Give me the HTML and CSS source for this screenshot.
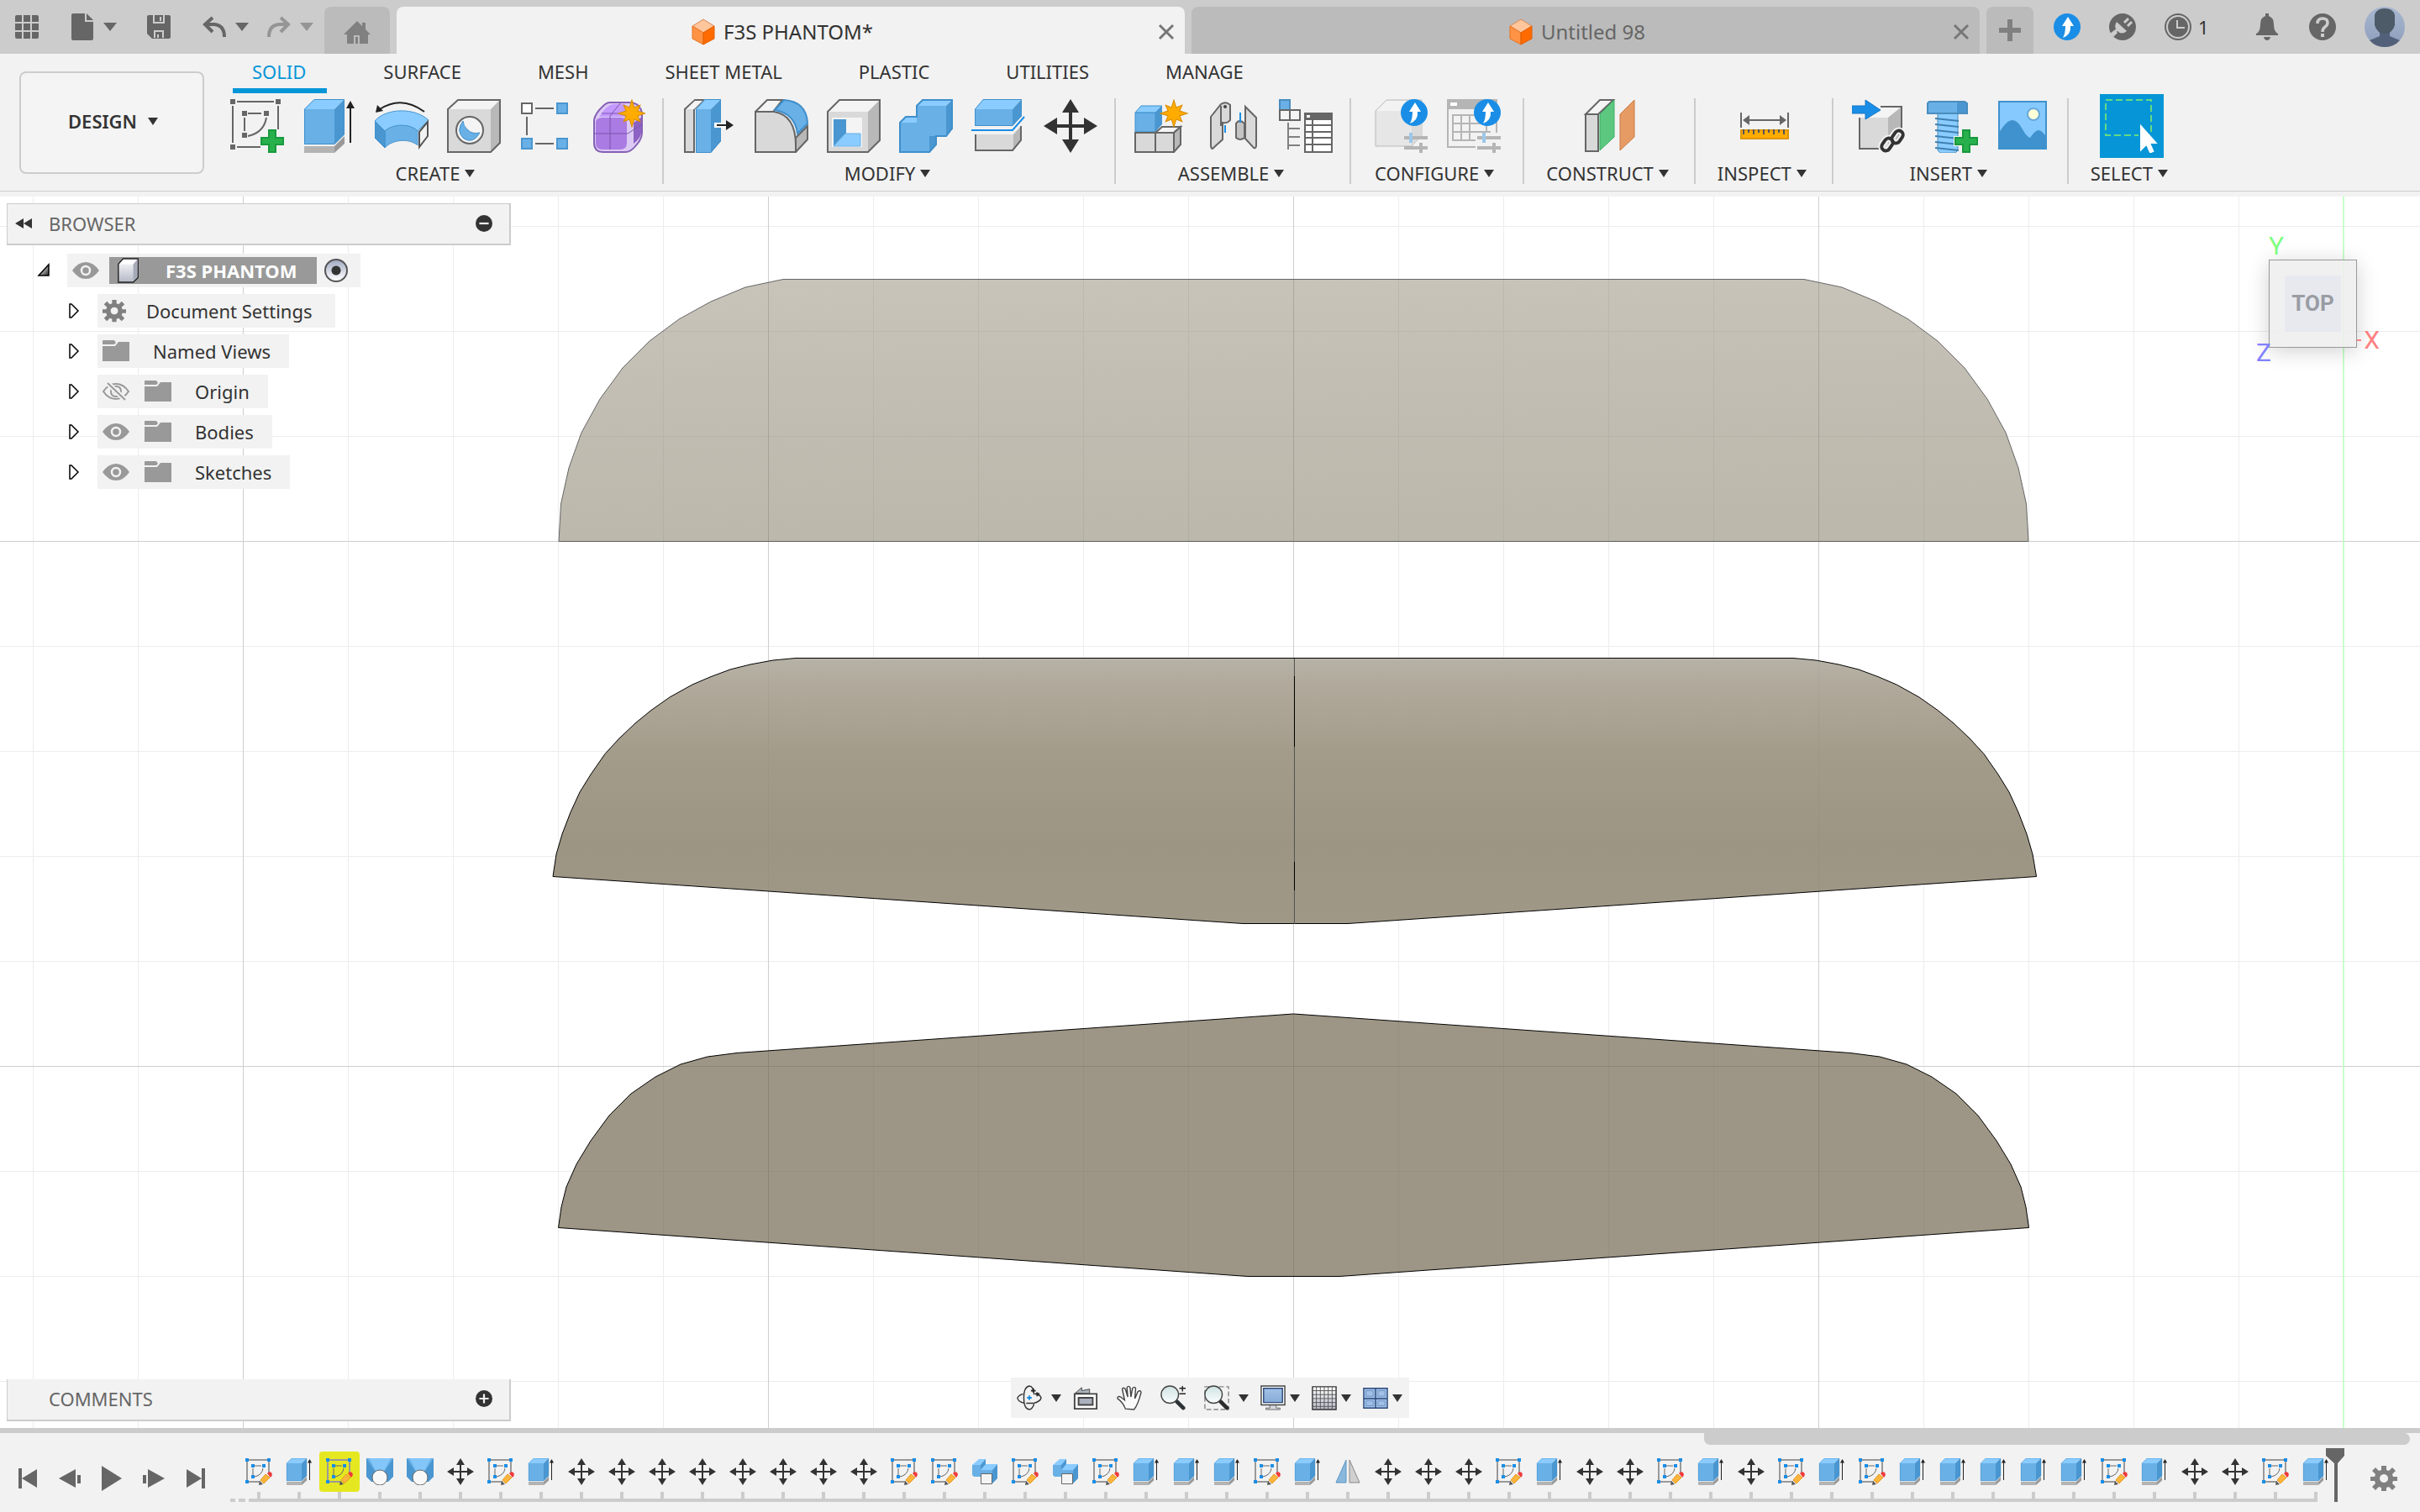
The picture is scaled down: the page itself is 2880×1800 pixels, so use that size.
FILE: index.html
```html
<!DOCTYPE html>
<html lang="en">
<head>
<meta charset="UTF-8">
<meta name="viewport" content="width=device-width,initial-scale=1">
<title>F3S PHANTOM*</title>
<link rel="stylesheet" href="styles.css">
</head>
<body>

<!-- ===== icon sprite ===== -->
<svg class="sprite" aria-hidden="true">
  <defs>
    <linearGradient id="metal" x1="0" y1="0" x2="0" y2="1"><stop offset="0" stop-color="#fff"/><stop offset="1" stop-color="#b4b9c6"/></linearGradient>
    <linearGradient id="dark" x1="0" y1="0" x2="1" y2="1"><stop offset=".3" stop-color="#ddd"/><stop offset="1" stop-color="#222"/></linearGradient>
    <linearGradient id="sky" x1="0" y1="0" x2="0" y2="1"><stop offset="0" stop-color="#a9b8d0"/><stop offset="1" stop-color="#8d9dba"/></linearGradient>
    <linearGradient id="glass" x1="0" y1="0" x2="0" y2="1"><stop offset="0" stop-color="#cfe3e3"/><stop offset="1" stop-color="#fbfdfd"/></linearGradient>
    <linearGradient id="screen" x1="0" y1="0" x2="0" y2="1"><stop offset="0" stop-color="#a3c1e6"/><stop offset="1" stop-color="#86abd8"/></linearGradient>
  </defs>

  <!-- title bar -->
  <symbol id="i-apps" viewBox="0 0 32 32"><path fill="#666" d="M4 2h6v8H2V4q0-2 2-2zM12 2h8v8h-8zM22 2h6q2 0 2 2v6h-8zM2 12h8v8H2zM12 12h8v8h-8zM22 12h8v8h-8zM2 22h8v8H4q-2 0-2-2zM12 22h8v8h-8zM22 22h8v6q0 2-2 2h-6z"/></symbol>
  <symbol id="i-file" viewBox="0 0 32 32"><path fill="#666" d="M5 0h14v10h10v20q0 2-2 2H5q-2 0-2-2V2q0-2 2-2zM21 0l8 8h-8z"/></symbol>
  <symbol id="i-save" viewBox="0 0 32 32"><path fill="#666" fill-rule="evenodd" d="M4 2h24q2 0 2 2v24q0 2-2 2H8l-6-6V4q0-2 2-2zM9 2v10h14V2h-2v8H11V2zM10 20v9h2v-7h8v7h2v-9zM17 4h2v5h-2zM14 25h2v4h-2z"/></symbol>
  <symbol id="i-undo" viewBox="0 0 32 32"><path fill="none" stroke="#666" stroke-width="4" d="M14 5L5 13l9 9M6 13h10q12 1 12 15"/></symbol>
  <symbol id="i-redo" viewBox="0 0 32 32"><path fill="none" stroke="#959595" stroke-width="4" d="M18 5l9 8-9 9M26 13H16Q4 14 4 28"/></symbol>
  <symbol id="i-home" viewBox="0 0 32 32"><path fill="#808080" fill-rule="evenodd" d="M16 3l6 6V5h4v8l6 6h-3v11H19V20h-7v10H4V19H0zM14 22h3v8h-3z"/></symbol>
  <symbol id="i-cube" viewBox="0 0 28 32"><path fill="#ffc59b" stroke="#d98a55" d="M14 1l13 8-13 8L1 9z"/><path fill="#ff9345" stroke="#e67322" d="M1 9l13 8v14L1 24z"/><path fill="#ff6b00" stroke="#e05e00" d="M27 9l-13 8v14l13-7z"/></symbol>
  <symbol id="i-close" viewBox="0 0 20 20"><path stroke="#777" stroke-width="3" d="M2 2l16 16M18 2L2 18"/></symbol>
  <symbol id="i-plus" viewBox="0 0 26 26"><path stroke="#808080" stroke-width="6" d="M13 0v26M0 13h26"/></symbol>
  <symbol id="i-up" viewBox="0 0 32 32"><circle cx="16" cy="16" r="16" fill="#1a8ee6"/><path fill="#fff" d="M17 4l7 11h-4q1 10-9 14 3-5 3-14h-4z"/></symbol>
  <symbol id="i-ext" viewBox="0 0 32 32"><circle cx="16" cy="16" r="16" fill="#666"/><path fill="none" stroke="#ccc" stroke-width="3" d="M1 26l9-7M18 11l5-5M22 15l5-5"/><path fill="#ccc" d="M9 10l12 11q-6 5-11 0-5-5-1-11z"/><path stroke="#ccc" stroke-width="3" d="M9 22l-5 5"/></symbol>
  <symbol id="i-clock" viewBox="0 0 32 32"><circle cx="16" cy="16" r="15" fill="none" stroke="#666" stroke-width="2"/><circle cx="16" cy="16" r="12" fill="#666"/><path fill="none" stroke="#ccc" stroke-width="2" d="M15 8v9h9"/></symbol>
  <symbol id="i-bell" viewBox="0 0 32 32"><path fill="#666" d="M14 0h4v3q6 2 6 10 0 9 5 11v2H3v-2q5-2 5-11 0-8 6-10zM12 28h8q-1 4-4 4t-4-4z"/></symbol>
  <symbol id="i-help" viewBox="0 0 32 32"><circle cx="16" cy="16" r="16" fill="#666"/><path fill="none" stroke="#ccc" stroke-width="3.5" d="M10 12q0-6 6-6t6 5q0 3-3 5t-3 6"/><path fill="#ccc" d="M14 24h4v4h-4z"/></symbol>
  <symbol id="i-user" viewBox="0 0 48 48"><circle cx="24" cy="24" r="24" fill="url(#sky)"/><path fill="#53607a" d="M6 40l12-5v-5h12v5l12 5q-7 8-18 8T6 40z"/><path fill="#4d5b68" d="M12 10q2-8 12-8t12 8v12q-3 10-12 10T12 22z"/></symbol>

  <!-- create -->
  <symbol id="i-sketch" viewBox="0 0 64 64"><path fill="none" stroke="#666" stroke-width="2" d="M8 3h44M3 8v44M57 8v28M8 57h28M21 17h16M17 22v16M43 22q-3 18-22 22"/><path fill="#666" d="M0 0h6v6H0zM54 0h6v6h-6zM0 54h6v6H0zM14 14h6v6h-6zM40 14h6v6h-6zM14 40h6v6h-6z"/><path fill="#28b04c" stroke="#189a3c" stroke-width="2" d="M46 37h8v9h9v8h-9v9h-8v-9h-9v-8h9z"/></symbol>
  <symbol id="i-extrude" viewBox="0 0 64 64"><path fill="#b3b3b3" d="M2 56h36v8H2z"/><path fill="#999" d="M38 56l12-12v9L38 64z"/><path fill="#8accff" d="M2 12L14 0h36L38 12z"/><path fill="#69b0e6" d="M2 12h36v42H2z"/><path fill="#4a96d0" d="M38 12L50 0v42L38 54z"/><path fill="none" stroke="#3f8fcb" d="M2.500 12L14 .5h35.500V42L38 53.500H2.500z"/><path stroke="#222" stroke-width="2" d="M57 52V8"/><path fill="#222" d="M57 2l5 9H52z"/></symbol>
  <symbol id="i-revolve" viewBox="0 0 64 64"><path fill="#8accff" stroke="#4a96d0" d="M0 26C14 10 48 10 64 25L51 38C42 29 22 29 12 38z"/><path fill="#69b0e6" stroke="#4a96d0" d="M12 38C22 29 42 29 51 38v17c-9-8-29-8-39 3z"/><path fill="#4a96d0" stroke="#3f8fcb" d="M0 26l12 12v20L0 46z"/><path fill="#f2f2f2" stroke="#555" stroke-width="2" d="M53 39l10-12v17L53 57z"/><path fill="none" stroke="#222" stroke-width="2" d="M6 12Q32-5 59 15"/><path fill="#222" d="M1 16L3 7l7 7z"/></symbol>
  <symbol id="i-box" viewBox="0 0 64 64"><path fill="#f4f4f4" d="M1 12L13 1h50L52 12z"/><path fill="#d9d9d9" d="M1 12h51v51H1z"/><path fill="#b8b8b8" d="M52 12L63 1v51L52 63z"/><path fill="none" stroke="#666" stroke-width="2" d="M1 12L13 1h50v51L52 63H1z"/></symbol>
  <symbol id="i-hole" viewBox="0 0 64 64"><use href="#i-box"/><circle cx="27" cy="37" r="16" fill="#f4f4f4" stroke="#666" stroke-width="2"/><path fill="#69b0e6" stroke="#3f8fcb" d="M19 26q-9 12 1 21 11 7 19-7-9 2-14-3-6-5-6-11z"/></symbol>
  <symbol id="i-pattern" viewBox="0 0 64 64"><path fill="#fff" stroke="#666" stroke-width="2" d="M3 5h12v12H3z"/><path fill="#69b0e6" stroke="#4a96d0" stroke-width="2" d="M45 5h12v12H45zM3 47h12v12H3zM45 47h12v12H45z"/><path stroke="#666" stroke-width="2" d="M19 11h22M9 21v22M19 53h22"/></symbol>
  <symbol id="i-star" viewBox="0 0 32 32"><path fill="#ffab00" stroke="#d98e00" d="M16 1l2.700 8.500 6.500-2.700-2.700 6.500L31 16l-8.500 2.700 2.700 6.500-6.500-2.700L16 31l-2.700-8.500-6.500 2.700 2.700-6.500L1 16l8.500-2.700-2.700-6.500 6.500 2.700z"/></symbol>
  <symbol id="i-form" viewBox="0 0 64 64"><path fill="#dccaf5" stroke="#8560b5" stroke-width="2" d="M3 25Q4 17 14 8q4-4 8-4h22q16 0 16 16v20q0 8-7 15-6 8-13 8H14Q3 63 3 52z"/><path fill="#c49aff" d="M14 14q7-8 12-8h14v15H9z"/><path fill="#a97be3" d="M5 28q0-6 8-6h22q7 0 7 8v22q0 8-8 8H13q-8 0-8-8z"/><path fill="#8d62c4" d="M50 28l9-6v18q0 6-9 13z"/><path fill="none" stroke="#7d55ad" d="M22 60V20L34 5M3 41h40l17-11M12 17h36"/><use href="#i-star" x="31" y="0" width="34" height="34"/></symbol>

  <!-- modify -->
  <symbol id="i-presspull" viewBox="0 0 64 64"><path fill="#d9d9d9" stroke="#666" stroke-width="2" d="M3 12L15 1h10L14 12v51H3z"/><path fill="#f4f4f4" d="M5 12L15 2h9L14 12z"/><path fill="#8accff" d="M16 12L27 0h19L34 12z"/><path fill="#69b0e6" d="M16 12h18v52H16z"/><path fill="#4a96d0" d="M34 12L46 0v50L34 64z"/><path fill="none" stroke="#3f8fcb" d="M16.500 12L27 .5h18.500V50L34 63.500H16.500z"/><path stroke="#fff" stroke-width="6" d="M38 31h18"/><path stroke="#222" stroke-width="2" d="M41 31h14"/><path fill="#222" d="M52 25l9 6-9 6z"/></symbol>
  <symbol id="i-fillet" viewBox="0 0 64 64"><path fill="#d9d9d9" stroke="#666" stroke-width="2" d="M1 15h22q26 4 26 40v8H1z"/><path fill="#b8b8b8" stroke="#666" stroke-width="2" d="M49 46l14-14v16L49 63z"/><path fill="#f4f4f4" stroke="#666" stroke-width="2" d="M1 15L15 1h18L22 15z"/><path fill="#69b0e6" stroke="#3f8fcb" stroke-width="2" d="M35 1q27 2 28 28L51 41Q48 17 24 13z"/></symbol>
  <symbol id="i-shell" viewBox="0 0 64 64"><path fill="#f4f4f4" d="M1 15L15 1h48L49 15z"/><path fill="#d9d9d9" d="M1 15h48v48H1z"/><path fill="#b8b8b8" d="M49 15L63 1v48L49 63z"/><path fill="none" stroke="#666" stroke-width="2" d="M1 15L15 1h48v48L49 63H1z"/><path fill="#f4f4f4" d="M6 22h36v35H6z"/><path fill="#4a96d0" d="M8 24h15v17L8 56z"/><path fill="#8accff" stroke="#69b0e6" d="M8 56l14-15h18v15z"/></symbol>
  <symbol id="i-combine" viewBox="0 0 64 64"><path fill="#8accff" d="M0 28l7-7h15v7zM21 8l7-8h36l-8 8z"/><path fill="#69b0e6" d="M0 28h21V8h35v36H36v20H0z"/><path fill="#4a96d0" d="M56 8l8-8v35l-8 9H44v10l-8 10V44h20z"/><path fill="none" stroke="#3f8fcb" stroke-width="2" d="M1 28l7-7h13V8l7-7h35v34l-7 9H44v10l-8 9H1z"/></symbol>
  <symbol id="i-split" viewBox="0 0 64 64"><path fill="#8accff" d="M4 12L14 0h46L49 12z"/><path fill="#69b0e6" d="M4 12h45v20H4z"/><path fill="#4a96d0" d="M49 12L60 0v20L49 32z"/><path fill="none" stroke="#3f8fcb" d="M4.500 12L14 .5h45.500V20L49 31.500H4.500z"/><path fill="none" stroke="#1a8ee6" stroke-width="2" d="M0 37h49l14-16"/><path fill="#d9d9d9" d="M5 42h45v19H5z"/><path fill="#b8b8b8" d="M50 42l9-10v18l-9 11z"/><path fill="none" stroke="#666" stroke-width="2" d="M5 42v19h44l10-12V32"/></symbol>
  <symbol id="i-move" viewBox="0 0 64 64"><path stroke="#333" stroke-width="4" d="M32 8v48M8 32h48"/><path fill="#333" d="M32 0l10 16H22zM32 64l10-16H22zM0 32l16-10v20zM64 32L48 22v20z"/></symbol>

  <!-- assemble -->
  <symbol id="i-component" viewBox="0 0 64 64"><path fill="#69b0e6" stroke="#3f8fcb" d="M1 16h24v23H1z"/><path fill="#8accff" stroke="#3f8fcb" d="M1 16l7-8h25l-8 8z"/><path fill="#4a96d0" d="M25 16l8-8v22l-8 9z"/><path fill="#d9d9d9" stroke="#666" stroke-width="2" d="M1 40h24v23H1zM25 40h22v23H25z"/><path fill="#f4f4f4" stroke="#666" stroke-width="2" d="M25 40l8-7h22l-8 7z"/><path fill="#b8b8b8" stroke="#666" stroke-width="2" d="M47 40l8-7v21l-8 9z"/><use href="#i-star" x="30" y="0" width="34" height="34"/></symbol>
  <symbol id="i-joint" viewBox="0 0 64 64"><path fill="#d9d9d9" stroke="#666" stroke-width="2" d="M5 21L17 6q6-4 11 1v18q-3 4-9 3v20L7 59q-2 0-2-4z"/><path fill="none" stroke="#666" stroke-width="2" d="M17 8v24"/><circle cx="22" cy="9" r="2" fill="#444"/><path fill="#d9d9d9" stroke="#666" stroke-width="2" d="M46 9l13 13v33q0 4-3 3L46 47z"/><path fill="#c4c4c4" stroke="#666" stroke-width="2" d="M35 29q4-6 10 0v17q-5 4-10 0z"/><path stroke="#1a8ee6" stroke-width="2" d="M22 31v9M40 16v12"/></symbol>
  <symbol id="i-bom" viewBox="0 0 64 64"><path fill="#69b0e6" stroke="#4a8dbe" stroke-width="2" d="M1 1h12v12H1z"/><path fill="#f4f4f4" stroke="#666" stroke-width="2" d="M1 13h12v12H1zM13 13h12v12H13z"/><path fill="none" stroke="#808080" stroke-width="2" d="M11 28v32M11 35h14M11 45h14M11 55h14"/><path fill="#fff" stroke="#666" stroke-width="2" d="M31 17h32v46H31z"/><path fill="#666" d="M31 16h33v9H31z"/><path fill="#fff" d="M33 19h4v3h-4z"/><path fill="none" stroke="#666" stroke-width="2" d="M31 31h32M31 39h32M31 46h32M31 54h32M40 24v39"/></symbol>

  <!-- configure -->
  <symbol id="i-tune" viewBox="0 0 28 24"><path fill="none" stroke="#b5b5b5" stroke-width="4" d="M0 6h28M0 18h28"/><path stroke="#9cc8ea" stroke-width="4" d="M8 0v12"/><path stroke="#b5b5b5" stroke-width="4" d="M20 12v12"/></symbol>
  <symbol id="i-config" viewBox="0 0 64 64"><path fill="#e6e6e6" stroke="#bbb" d="M1 14L14 1h42v42L44 56H1z"/><path fill="#f2f2f2" d="M2 14L14 2h41L44 14z"/><path fill="#dadada" d="M44 14L56 2v40L44 54z"/><use href="#i-up" x="31" y="0" width="32" height="32"/><use href="#i-tune" x="35" y="40" width="28" height="24"/></symbol>
  <symbol id="i-configtable" viewBox="0 0 64 64"><path fill="#f2f2f2" stroke="#b5b5b5" stroke-width="2" d="M1 1h58v56H1z"/><path fill="#b5b5b5" d="M0 0h60v12H0z"/><path fill="#fff" d="M4 4h8v4H4z"/><path fill="none" stroke="#b5b5b5" stroke-width="2" d="M7 19h40v30H7zM7 29h45M7 39h45M17 19v30M27 19v30"/><use href="#i-up" x="32" y="0" width="32" height="32"/><path fill="#f2f2f2" d="M34 40h30v24H34z"/><use href="#i-tune" x="36" y="40" width="28" height="24"/></symbol>

  <!-- construct, inspect, insert, select -->
  <symbol id="i-plane" viewBox="0 0 64 64"><path fill="#d9d9d9" stroke="#666" stroke-width="2" d="M18 62H3V18h15z"/><path fill="#f4f4f4" stroke="#666" stroke-width="2" d="M3 18L20 1h16L18 18z"/><path fill="#5bc77f" stroke="#3cae62" d="M20 18L37 1v44L20 61z"/><path fill="#e69b65" stroke="#c97b40" d="M44 18L61 1v44L44 61z"/></symbol>
  <symbol id="i-measure" viewBox="0 0 64 64"><path stroke="#666" stroke-width="2" d="M4 16v18M60 16v18M8 25h48"/><path fill="#666" d="M6 25l8-6v12zM58 25l-8-6v12z"/><path fill="#ffab00" stroke="#e09600" stroke-width="2" d="M4 37h56v10H4z"/><path stroke="#555" stroke-width="2" d="M7 36v6M13 36v4M19 36v6M25 36v4M31 36v6M37 36v4M43 36v6M49 36v4M55 36v6"/></symbol>
  <symbol id="i-derive" viewBox="0 0 64 64"><path fill="#d9d9d9" d="M9 22h34v37H9z"/><path fill="#f4f4f4" d="M9 22L24 9h35L43 22z"/><path fill="#b8b8b8" d="M43 22L59 9v36L43 59z"/><path fill="none" stroke="#666" stroke-width="2" d="M9 22v37h25M34 9h25v30"/><path fill="#1a8ee6" stroke="#1476c4" d="M0 8h16V1l18 12-18 11v-7H0z"/><g fill="none" stroke="#f2f2f2" stroke-width="8"><rect x="49" y="37" width="10" height="16" rx="5" transform="rotate(35 54 45)"/><rect x="37" y="46" width="10" height="16" rx="5" transform="rotate(35 42 54)"/></g><g fill="none" stroke="#333" stroke-width="4"><rect x="49" y="37" width="10" height="16" rx="5" transform="rotate(35 54 45)"/><rect x="37" y="46" width="10" height="16" rx="5" transform="rotate(35 42 54)"/></g></symbol>
  <symbol id="i-bolt" viewBox="0 0 64 64"><path fill="#8accff" stroke="#4a8dbe" d="M16 17h24v44l-3 3H19l-3-3z"/><path fill="#69b0e6" stroke="#4a8dbe" stroke-width="2" d="M6 3h42l3 2v12H4V5z"/><path fill="#4a96d0" d="M39 4h11v12H39z"/><path stroke="#3f80b0" stroke-width="2" d="M13 23l28 3M13 30l28 3M13 37l28 3M13 44l28 3M13 51l28 3M13 58l28 3"/><path fill="#28b04c" stroke="#f2f2f2" stroke-width="4" d="M46 37h8v9h9v8h-9v9h-8v-9h-9v-8h9z"/><path fill="#28b04c" stroke="#189a3c" stroke-width="2" d="M46 37h8v9h9v8h-9v9h-8v-9h-9v-8h9z"/></symbol>
  <symbol id="i-image" viewBox="0 0 64 64"><path fill="#85c9ff" stroke="#3f92cd" stroke-width="2" d="M3 3h56v56H3z"/><circle cx="44" cy="18" r="7" fill="#ffffd9" stroke="#69a9d9" stroke-width="2"/><path fill="#3f92cd" d="M3 40q9-15 16-15 6 0 12 11 5 9 9 10 6-9 10-9 4 0 9 8v14H3z"/></symbol>
  <symbol id="i-select" viewBox="0 0 64 64"><path fill="none" stroke="#64da82" stroke-width="2" stroke-dasharray="8 4" d="M1 1h54v42H1z"/><path fill="#fff" stroke="#0696d7" stroke-width="2" d="M41 27v38l8-8 4 9 7-3-4-9h9z"/></symbol>

  <!-- browser -->
  <symbol id="i-rewind" viewBox="0 0 20 12"><path fill="#333" d="M10 0v12L0 6zM20 0v12L10 6z"/></symbol>
  <symbol id="i-minus" viewBox="0 0 18 18"><circle cx="9" cy="9" r="9" fill="#333"/><path stroke="#f2f2f2" stroke-width="2" d="M4 9h10"/></symbol>
  <symbol id="i-add" viewBox="0 0 18 18"><circle cx="9" cy="9" r="9" fill="#333"/><path stroke="#f2f2f2" stroke-width="2" d="M4 9h10M9 4v10"/></symbol>
  <symbol id="i-open" viewBox="0 0 16 20"><path fill="url(#dark)" stroke="#000" stroke-width="1.500" d="M14 3v13H2z"/></symbol>
  <symbol id="i-closed" viewBox="0 0 16 20"><path fill="#fff" stroke="#000" stroke-width="1.500" d="M3 2l2 0 8 8-8 8H3z"/></symbol>
  <symbol id="i-eye" viewBox="0 0 32 32"><path fill="#999" d="M0 16Q7 6 16 6t16 10q-7 10-16 10T0 16z"/><circle cx="16" cy="16" r="5" fill="none" stroke="#f2f2f2" stroke-width="2.500"/></symbol>
  <symbol id="i-eyeoff" viewBox="0 0 32 32"><path fill="none" stroke="#999" stroke-width="2" d="M1 16Q7 7 16 7t15 9q-6 9-15 9T1 16zM16 10q-6 0-6 6t6 6 6-6-6-6zM15 14q-2 2 0 4"/><path stroke="#f2f2f2" stroke-width="6" d="M6 6l21 20"/><path stroke="#999" stroke-width="2" d="M6 6l21 20"/></symbol>
  <symbol id="i-folder" viewBox="0 0 32 32"><path fill="#999" d="M0 4q0-1 1-1h13l2 3-2 2H0zM0 10h15l4-5h13v23H0z"/></symbol>
  <symbol id="i-gear" viewBox="0 0 32 32"><path fill="#808080" fill-rule="evenodd" d="M13 1h6v5l3 1 4-4 4 4-4 4 1 3h5v5h-5l-1 3 4 4-4 4-4-4-3 1v4h-6v-4l-3-1-4 4-4-4 4-4-1-3H0v-5h5l1-3-4-4 4-4 4 4 3-1zM16 11a5 5 0 1 0 .1 0z"/></symbol>
  <symbol id="i-part" viewBox="0 0 28 32"><path fill="url(#metal)" stroke="#222" stroke-width="1.500" d="M1 8l6-7h19v24l-6 6H1z"/><path fill="#fff" d="M2 8l6-6h17l-5 6z"/><path fill="#a5aab8" d="M20 8l5-6v22l-5 6z"/></symbol>

  <!-- navigation bar -->
  <symbol id="n-orbit" viewBox="0 0 32 32"><path fill="none" stroke="#333" stroke-width="1.500" d="M8 11q-6 2-7 5 0 5 9 7M12 23h9q9-2 10-7-1-3-4-4M22 12q-1-11-6-11-7 1-7 15t7 15q4-1 6-7"/><path stroke="#1a8ee6" stroke-width="2" d="M16 13v6M13 16h6"/><path stroke="#222" stroke-width="2" d="M21 4v5M18 7h6M26 9v5M23 11h6"/></symbol>
  <symbol id="n-look" viewBox="0 0 32 32"><path fill="#aab3bb" stroke="#444" d="M3 10l8-7v4l10-2v6z"/><path fill="#fff" stroke="#444" stroke-width="2" d="M2 11h28v19H2z"/><path fill="#aab0bc" stroke="#444" stroke-width="2" d="M7 16h18v9H7z"/></symbol>
  <symbol id="n-hand" viewBox="0 0 32 32"><path fill="#fafafa" stroke="#444" stroke-width="1.500" d="M11 30Q8 22 1 17q0-4 4-2l5 4L7 5q1-3 4 0l3 10-1-12q2-3 4 0l1 12 2-11q3-3 4 0l-1 13 4-9q3-2 4 1-4 16-9 22z"/></symbol>
  <symbol id="n-zoom" viewBox="0 0 32 32"><path stroke="#2b3336" stroke-width="5" stroke-linecap="round" d="M21 21l8 8"/><circle cx="12" cy="12" r="11" fill="url(#glass)" stroke="#444" stroke-width="1.500"/><path stroke="#222" stroke-width="1.500" d="M28 1v7M24 4h8M24 11h8"/></symbol>
  <symbol id="n-fit" viewBox="0 0 32 32"><path fill="none" stroke="#888" stroke-width="1.500" stroke-dasharray="6 3" d="M1 2h30v29H1z"/><path stroke="#2b2b2b" stroke-width="5" stroke-linecap="round" d="M21 21l8 8"/><circle cx="12" cy="12" r="11" fill="url(#glass)" stroke="#444" stroke-width="1.500"/></symbol>
  <symbol id="n-display" viewBox="0 0 32 32"><path fill="#d5d9e0" stroke="#666" d="M12 25h8v4h5v2H7v-2h5z"/><path fill="#fff" stroke="#444" stroke-width="1.500" d="M1 1h30v24H1z"/><path fill="url(#screen)" stroke="#2c4a7a" stroke-width="1.500" d="M4 4h24v18H4z"/></symbol>
  <symbol id="n-grid" viewBox="0 0 32 32"><path fill="url(#metal)" stroke="#333" stroke-width="1.500" d="M1 2h30v29H1z"/><path stroke="#555" d="M6 2v29M11 2v29M16 2v29M21 2v29M26 2v29M1 7h30M1 12h30M1 17h30M1 22h30M1 27h30"/></symbol>
  <symbol id="n-views" viewBox="0 0 32 32"><path fill="#a3c1e6" stroke="#2c4a7a" stroke-width="1.500" d="M1 4h30v25H1zM16 4v25M1 17h30"/><path fill="none" stroke="#6a93c8" d="M4 7h9v7H4zM19 7h9v7h-9zM4 20h9v6H4zM19 20h9v6h-9z"/></symbol>

  <!-- playback + timeline -->
  <symbol id="p-first" viewBox="0 0 32 32"><path fill="#666" d="M5 4h4v24H5zM27 5v22L9 16z"/></symbol>
  <symbol id="p-prev" viewBox="0 0 32 32"><path fill="#666" d="M23 5v22L3 16zM25 12h4v10h-4z"/></symbol>
  <symbol id="p-play" viewBox="0 0 32 32"><path fill="#666" d="M4 1v30l24-15z"/></symbol>
  <symbol id="p-next" viewBox="0 0 32 32"><path fill="#666" d="M9 5v22l20-11zM3 12h4v10H3z"/></symbol>
  <symbol id="p-last" viewBox="0 0 32 32"><path fill="#666" d="M23 4h4v24h-4zM5 5v22l18-11z"/></symbol>
  <symbol id="t-sketch" viewBox="0 0 32 32"><path fill="none" stroke="#999" stroke-width="2" d="M4 2h22M2 4v22M28 4v14M4 28h14"/><path fill="none" stroke="#666" d="M11 9h8M9 12v8M21 12q-1 8-10 10"/><path fill="#1a8ee6" d="M0 0h4v4H0zM26 0h4v4h-4zM0 26h4v4H0zM7 7h4v4H7zM20 7h4v4h-4zM7 20h4v4H7z"/><path fill="#fbb53c" stroke="#e59a20" d="M24 19l5 4-7 7-4-4z"/><path fill="#f03a3a" d="M26 18q2-3 5-1 2 3-1 6z"/><path fill="#555" d="M17 27l4 4-5 1z"/></symbol>
  <symbol id="t-loft" viewBox="0 0 32 32"><path fill="#4a96d0" d="M0 0h32v22l-6 6H6l-6-6z"/><path fill="#69b0e6" d="M0 0h32L20 18h-8z"/><path fill="#8accff" d="M3 0h26l-9 17h-8L5 3z" opacity=".8"/><circle cx="16" cy="23" r="9" fill="#f8f8f8" stroke="#666"/></symbol>
  <symbol id="t-combine" viewBox="0 0 32 32"><path fill="#8accff" d="M1 8l8-7h8v6h14l-6 7H11V8z"/><path fill="#69b0e6" d="M1 8h10v6h14v16H11v-8H3l-2-2z"/><path fill="#4a96d0" d="M25 14l6-7v17l-6 6zM11 8l6-7v6l-6 7z"/><path fill="#f4f4f4" stroke="#666" d="M11.500 18.500h13v12h-13z"/></symbol>
  <symbol id="t-mirror" viewBox="0 0 32 32"><path fill="#8ab8dc" stroke="#5a96c4" d="M14 2v27H2z"/><path fill="#d0d0d0" stroke="#888" d="M18 2v27h12z"/></symbol>
</svg>

<header>
  <!-- ===== title bar ===== -->
  <div class="titlebar">
    <div class="quick">
      <button aria-label="Data panel"><svg><use href="#i-apps"/></svg></button>
      <button aria-label="File" class="menu"><svg><use href="#i-file"/></svg></button>
      <button aria-label="Save"><svg><use href="#i-save"/></svg></button>
      <div class="history">
        <button aria-label="Undo" class="menu"><svg><use href="#i-undo"/></svg></button>
        <button aria-label="Redo" class="menu faded"><svg><use href="#i-redo"/></svg></button>
      </div>
    </div>
    <div class="docs">
      <button class="doc home" aria-label="Home"><svg><use href="#i-home"/></svg></button>
      <div class="doc active"><a href="#"><svg><use href="#i-cube"/></svg>F3S PHANTOM*</a><button aria-label="Close"><svg><use href="#i-close"/></svg></button></div>
      <div class="doc"><a href="#"><svg><use href="#i-cube"/></svg>Untitled 98</a><button aria-label="Close"><svg><use href="#i-close"/></svg></button></div>
      <button class="doc new" aria-label="New design"><svg><use href="#i-plus"/></svg></button>
    </div>
    <div class="account">
      <button aria-label="Updates"><svg><use href="#i-up"/></svg></button>
      <button aria-label="Extensions"><svg><use href="#i-ext"/></svg></button>
      <button class="jobs"><svg><use href="#i-clock"/></svg>1</button>
      <button aria-label="Notifications"><svg><use href="#i-bell"/></svg></button>
      <button aria-label="Help"><svg><use href="#i-help"/></svg></button>
      <button class="avatar" aria-label="Account"><svg><use href="#i-user"/></svg></button>
    </div>
  </div>

  <!-- ===== ribbon ===== -->
  <div class="ribbon">
    <div class="workspace">
      <select aria-label="Workspace"><option>DESIGN</option></select>
      <span class="caret"></span>
    </div>
    <div class="tools">
      <nav class="tabs">
        <a href="#" class="active">SOLID</a>
        <a href="#">SURFACE</a>
        <a href="#">MESH</a>
        <a href="#">SHEET METAL</a>
        <a href="#">PLASTIC</a>
        <a href="#">UTILITIES</a>
        <a href="#">MANAGE</a>
      </nav>
      <div class="groups">
        <section class="group">
          <div class="icons">
            <button aria-label="Create Sketch"><svg><use href="#i-sketch"/></svg></button>
            <button aria-label="Extrude"><svg><use href="#i-extrude"/></svg></button>
            <button aria-label="Revolve"><svg><use href="#i-revolve"/></svg></button>
            <button aria-label="Hole"><svg><use href="#i-hole"/></svg></button>
            <button aria-label="Pattern"><svg><use href="#i-pattern"/></svg></button>
            <button aria-label="Create Form"><svg><use href="#i-form"/></svg></button>
          </div>
          <button class="label">CREATE<span class="caret"></span></button>
        </section>
        <section class="group">
          <div class="icons">
            <button aria-label="Press Pull"><svg><use href="#i-presspull"/></svg></button>
            <button aria-label="Fillet"><svg><use href="#i-fillet"/></svg></button>
            <button aria-label="Shell"><svg><use href="#i-shell"/></svg></button>
            <button aria-label="Combine"><svg><use href="#i-combine"/></svg></button>
            <button aria-label="Split Body"><svg><use href="#i-split"/></svg></button>
            <button aria-label="Move"><svg><use href="#i-move"/></svg></button>
          </div>
          <button class="label">MODIFY<span class="caret"></span></button>
        </section>
        <section class="group">
          <div class="icons">
            <button aria-label="New Component"><svg><use href="#i-component"/></svg></button>
            <button aria-label="Joint"><svg><use href="#i-joint"/></svg></button>
            <button aria-label="Bill of Materials"><svg><use href="#i-bom"/></svg></button>
          </div>
          <button class="label">ASSEMBLE<span class="caret"></span></button>
        </section>
        <section class="group wide">
          <div class="icons">
            <button aria-label="Configure"><svg><use href="#i-config"/></svg></button>
            <button aria-label="Configuration Table"><svg><use href="#i-configtable"/></svg></button>
          </div>
          <button class="label">CONFIGURE<span class="caret"></span></button>
        </section>
        <section class="group">
          <div class="icons"><button aria-label="Offset Plane"><svg><use href="#i-plane"/></svg></button></div>
          <button class="label">CONSTRUCT<span class="caret"></span></button>
        </section>
        <section class="group">
          <div class="icons"><button aria-label="Measure"><svg><use href="#i-measure"/></svg></button></div>
          <button class="label">INSPECT<span class="caret"></span></button>
        </section>
        <section class="group">
          <div class="icons">
            <button aria-label="Insert Derive"><svg><use href="#i-derive"/></svg></button>
            <button aria-label="Insert Fastener"><svg><use href="#i-bolt"/></svg></button>
            <button aria-label="Canvas"><svg><use href="#i-image"/></svg></button>
          </div>
          <button class="label">INSERT<span class="caret"></span></button>
        </section>
        <section class="group">
          <div class="icons"><button class="on" aria-label="Select"><svg><use href="#i-select"/></svg></button></div>
          <button class="label">SELECT<span class="caret"></span></button>
        </section>
      </div>
    </div>
  </div>
</header>

<!-- ===== viewport ===== -->
<main>
  <svg class="scene" viewBox="0 234 2880 1466" preserveAspectRatio="xMidYMid slice" role="img" aria-label="Top view of three wing bodies">
    <defs>
      <pattern id="minor" x="39" y="144" width="125" height="125" patternUnits="userSpaceOnUse"><path fill="#000" fill-opacity=".07" d="M0 0h125v1H1v124H0z"/></pattern>
      <pattern id="major" x="289" y="19" width="625" height="625" patternUnits="userSpaceOnUse"><path fill="#000" fill-opacity=".13" d="M0 0h625v1H1v624H0z"/></pattern>
      <linearGradient id="tail" x1="0" y1="0" x2=".1" y2="1"><stop offset="0" stop-color="#c8c4ba"/><stop offset=".5" stop-color="#c1bdb2"/><stop offset="1" stop-color="#bcb8ac"/></linearGradient>
      <linearGradient id="wing" x1="0" y1="0" x2="0" y2="1"><stop offset="0" stop-color="#b6b2a6"/><stop offset=".15" stop-color="#aea697"/><stop offset=".35" stop-color="#a49c8b"/><stop offset=".7" stop-color="#9d9584"/><stop offset="1" stop-color="#a09887"/></linearGradient>
      <path id="b1" d="M665 644.500L667.500 600 677 557 692 515 714 475 741 438 773 406 808 380 846 359 887 342 932 332.500H2147L2192 342 2233 359 2271 380 2306 406 2338 438 2365 475 2387 515 2402 557 2411.500 600 2414 644.500z"/>
      <path id="b2" d="M658 1043.500L662 1017 669 993 679 967 690 943 703 922 720 897.500 737 879 756 861 775 845.500 797 830 824 815 845 806 869 797 893 791 920 786 947 783.500H2134L2161 786 2188 791 2212 797 2236 806 2257 815 2284 830 2306 845.500 2325 861 2344 879 2361 897.500 2378 922 2391 943 2402 967 2412 993 2419 1017 2423.500 1043.500 1604 1099.500H1479z"/>
      <path id="b3" d="M664.500 1461.500L668 1437 674 1413 686 1386 703 1358 725 1328 751 1302 780 1282 810 1267 842 1258 877 1253.500 1539.500 1207 2202 1253.500 2237 1258 2269 1267 2299 1282 2328 1302 2354 1328 2376 1358 2393 1386 2405 1413 2411 1437 2414.500 1461.500 1594 1519.500H1485z"/>
    </defs>
    <rect y="234" width="2880" height="1466" fill="url(#minor)"/>
    <rect y="234" width="2880" height="1466" fill="url(#major)"/>
    <path fill="#c8ffc8" d="M2788 234h2v1466h-2z"/>
    <use href="#b1" fill="url(#tail)" stroke="#666"/>
    <use href="#b1" fill="url(#minor)" opacity=".7"/>
    <use href="#b1" fill="url(#major)" opacity=".7"/>
    <use href="#b2" fill="url(#wing)" stroke="#000"/>
    <use href="#b2" fill="url(#major)" opacity=".3"/>
    <use href="#b3" fill="#9d9585" stroke="#000"/>
    <use href="#b3" fill="url(#minor)" opacity=".5"/>
    <use href="#b3" fill="url(#major)" opacity=".6"/>
    <path stroke="#555" d="M1540.500 784v316"/>
    <path stroke="#000" d="M1540.500 805v84M1540.500 1026v34"/>
  </svg>

  <section class="browser">
    <div class="panel">
      <button aria-label="Collapse"><svg class="rewind"><use href="#i-rewind"/></svg></button>
      <h2>BROWSER</h2>
      <button aria-label="Hide"><svg><use href="#i-minus"/></svg></button>
    </div>
    <ul class="tree">
      <li class="root"><button class="twist" aria-label="Collapse"><svg><use href="#i-open"/></svg></button>
        <label><svg><use href="#i-eye"/></svg><b><svg><use href="#i-part"/></svg>F3S PHANTOM</b><input type="radio" name="component" checked></label></li>
      <li><button class="twist" aria-label="Expand"><svg><use href="#i-closed"/></svg></button>
        <span class="item settings"><svg><use href="#i-gear"/></svg>Document Settings</span></li>
      <li><button class="twist" aria-label="Expand"><svg><use href="#i-closed"/></svg></button>
        <span class="item"><svg><use href="#i-folder"/></svg>Named Views</span></li>
      <li><button class="twist" aria-label="Expand"><svg><use href="#i-closed"/></svg></button>
        <span class="item"><svg><use href="#i-eyeoff"/></svg><svg><use href="#i-folder"/></svg>Origin</span></li>
      <li><button class="twist" aria-label="Expand"><svg><use href="#i-closed"/></svg></button>
        <span class="item"><svg><use href="#i-eye"/></svg><svg><use href="#i-folder"/></svg>Bodies</span></li>
      <li><button class="twist" aria-label="Expand"><svg><use href="#i-closed"/></svg></button>
        <span class="item"><svg><use href="#i-eye"/></svg><svg><use href="#i-folder"/></svg>Sketches</span></li>
    </ul>
  </section>

  <div class="viewcube">
    <button>TOP</button>
    <span class="axis y">Y</span>
    <span class="axis x">X</span>
    <span class="axis z">Z</span>
  </div>

  <section class="panel comments">
    <h2>COMMENTS</h2>
    <button aria-label="Add comment"><svg><use href="#i-add"/></svg></button>
  </section>

  <div class="navbar">
    <button class="menu" aria-label="Orbit"><svg><use href="#n-orbit"/></svg></button>
    <button class="plain" aria-label="Look At"><svg><use href="#n-look"/></svg></button>
    <button class="plain" aria-label="Pan"><svg><use href="#n-hand"/></svg></button>
    <button class="plain" aria-label="Zoom"><svg><use href="#n-zoom"/></svg></button>
    <button class="menu" aria-label="Fit"><svg><use href="#n-fit"/></svg></button>
    <button class="menu tight" aria-label="Display Settings"><svg><use href="#n-display"/></svg></button>
    <button class="menu tight" aria-label="Grid and Snaps"><svg><use href="#n-grid"/></svg></button>
    <button class="menu tight" aria-label="Viewports"><svg><use href="#n-views"/></svg></button>
  </div>
</main>

<!-- ===== timeline ===== -->
<footer>
  <div class="rule"></div>
  <div class="scroll"><div class="thumb"></div></div>
  <div class="timeline">
    <div class="playback">
      <button aria-label="First"><svg><use href="#p-first"/></svg></button>
      <button aria-label="Previous"><svg><use href="#p-prev"/></svg></button>
      <button aria-label="Play"><svg><use href="#p-play"/></svg></button>
      <button aria-label="Next"><svg><use href="#p-next"/></svg></button>
      <button aria-label="Last"><svg><use href="#p-last"/></svg></button>
    </div>
    <div class="track">
      <ol id="features"></ol>
      <svg class="marker" viewBox="0 0 22 64"><path fill="#666" d="M0 0h22v9l-8 9v46h-4V18L0 9z"/></svg>
    </div>
    <button class="settings" aria-label="Timeline settings"><svg><use href="#i-gear"/></svg></button>
  </div>
</footer>

<script>
/* one letter per feature: s sketch, e extrude, l loft, m move, c combine, r mirror */
const features = 'sesllmsemmmmmmmm' + 'sscscseeeser' + 'mmmsemmsemse' + 'seeeeesemmse';
const kinds = {
  s: ['Sketch', 't-sketch'], e: ['Extrude', 'i-extrude'], l: ['Loft', 't-loft'],
  m: ['Move', 'i-move'], c: ['Combine', 't-combine'], r: ['Mirror', 't-mirror']
};
document.getElementById('features').innerHTML = [...features].map((k, i) =>
  `<li><button${i === 2 ? ' class="current"' : ''} aria-label="${kinds[k][0]}"><svg><use href="#${kinds[k][1]}"/></svg></button></li>`
).join('');
</script>
</body>
</html>
```
FILE: styles.css
```css
:root{
  --bar:#ccc;--tab:#bbb;--bg:#f2f2f2;--fg:#333;--muted:#666;--accent:#0696d7;
}
*{box-sizing:border-box;margin:0;padding:0}
body{display:flex;flex-direction:column;height:100vh;overflow:hidden;
     font:22px/26px "Noto Sans","Open Sans",sans-serif;background:#fff;color:var(--fg)}
button,select{font:inherit;color:inherit;border:none;background:none;cursor:pointer}
a{color:inherit;text-decoration:none}
ul,ol{list-style:none}
svg{display:block;flex:none}
.sprite{position:absolute;width:0;height:0}
.caret,.menu::after{content:"";flex:none;border:6px solid transparent;border-top:9px solid var(--fg);border-bottom:0}

/* title bar */
.titlebar{display:flex;align-items:stretch;height:64px;background:var(--bar)}
.titlebar button svg{width:32px;height:32px}
.quick{display:flex;align-items:center;gap:34px;width:386px;padding-left:16px}
.history{display:flex;gap:20px}
.quick .menu{display:flex;align-items:center;gap:9px}
.quick .menu::after{border-width:10px 8px 0;border-top-color:var(--muted)}
.quick .faded::after{border-top-color:#959595}
.docs{display:flex;flex:1;gap:8px;padding-top:8px}
.doc{display:flex;align-items:center;flex:1;background:var(--tab);border-radius:8px 8px 0 0;color:var(--muted);padding:8px 12px 4px}
.doc.active{background:var(--bg);color:var(--fg)}
.doc a{display:flex;align-items:center;justify-content:center;gap:10px;flex:1;font-size:24px;line-height:32px}
.doc a svg{width:28px;height:32px}
.titlebar .doc button svg{width:20px;height:20px}
.doc.home,.doc.new{flex:none;justify-content:center;padding:8px 0 4px}
.doc.home{width:78px}
.doc.new{width:56px;padding:8px 0}
.titlebar .doc.new svg{width:26px;height:26px}
.account{display:flex;align-items:center;gap:34px;padding:0 18px 0 24px}
.account .jobs{display:flex;align-items:center;gap:8px;width:72px;font-size:22px}
.titlebar .avatar svg{width:48px;height:48px}

/* ribbon */
header{flex:none;background:var(--bg);padding-bottom:6px}
.ribbon{display:flex;height:164px;padding-left:23px;border-bottom:1px solid var(--bar)}
.workspace{display:grid;width:220px;height:122px;margin-top:21px;padding-bottom:4px;border:2px solid var(--bar);border-radius:8px;background:#f4f4f4;align-items:center}
.workspace>*{grid-area:1/1}
.workspace select{appearance:none;width:100%;height:100%;padding-left:56px;font-weight:600;outline:none}
.workspace .caret{margin-left:151px;width:12px;pointer-events:none}
.tools{margin-left:29px}
.tabs{display:flex;gap:43px;height:47px;padding-left:5px}
.tabs a{padding:8px 24px 0;border-bottom:6px solid transparent}
.tabs .active{padding:8px 25px 0 23px;color:var(--accent);border-color:var(--accent)}
.groups{display:flex;margin-top:6px}
.group{display:flex;flex-direction:column;align-items:center;gap:11px;height:102px;padding:1px 20px 0 22px;border-left:2px solid var(--bar)}
.group:first-child{border:none;padding-left:2px}
.icons{display:flex;gap:22px}
.icons svg{width:64px;height:64px}
.icons .on{background:var(--accent);outline:6px solid var(--accent)}
.label{display:flex;align-items:center;gap:6px;padding:0 10px 0 4px;line-height:26px}
.wide .label{padding:0 14px 0 6px}

/* viewport */
main{position:relative;flex:1;min-height:0;overflow:hidden}
.scene{width:100%;height:100%}
.panel{display:flex;align-items:center;justify-content:space-between;height:50px;padding:0 20px 2px 9px;
       background:var(--bg);border:1px solid var(--bar);border-width:1px 2px 2px 1px;width:600px}
.panel h2{flex:1;padding-left:20px;font-size:22px;font-weight:400;color:var(--muted)}
.panel svg{width:20px;height:20px}
.panel .rewind{height:12px}
.browser{position:absolute;left:8px;top:8px}
.comments{position:absolute;left:8px;bottom:8px;border-top:none}
.comments h2{padding-left:40px}
.tree{padding-top:10px}
.tree li{display:flex;align-items:center;height:40px;margin-bottom:8px;padding-left:72px}
.tree .root{padding-left:36px}
.twist svg{width:16px;height:20px}
.twist{width:20px;margin-right:16px}
.item,.tree label{display:flex;align-items:center;height:40px;background:var(--bg)}
.tree svg+svg{margin-left:18px}
.item{padding:0 22px 1px 6px}
.item svg,.tree label>svg{width:32px;height:32px}
.item svg:last-of-type{margin-right:28px}
.item.settings{padding-right:28px}
.item.settings svg{width:28px;margin-right:24px}
.tree label{padding:0 15px 0 6px}
.tree b{display:flex;align-items:center;height:32px;gap:30px;margin:0 9px 0 12px;padding:0 23px 0 9px;background:#999;color:#fff;font-weight:700}
.tree b svg{width:28px;height:30px}
.tree input{appearance:none;width:28px;height:28px;border:2px solid #555;border-radius:50%;
            background:radial-gradient(circle,#333 0 5px,transparent 6px),linear-gradient(#a3acc4,#fff)}
.viewcube{position:absolute;right:75px;top:75px;width:105px;height:105px;padding:18px;
          background:rgba(238,238,238,.88);border:1px solid #999;box-shadow:0 4px 24px rgba(0,0,0,.18)}
.viewcube button{width:67px;height:67px;background:rgba(226,230,238,.7);color:#999ca3;
                 font:bold 26px/67px Roboto,sans-serif}
.axis{position:absolute;font:30px/30px Roboto,sans-serif}
.axis.y{left:-1px;top:-32px;color:#7fff7f}
.axis.x{right:-28px;bottom:-7px;color:#ff8080}
.axis.x::before{content:"";position:absolute;right:22px;top:14px;width:5px;height:2px;background:currentColor}
.axis.z{left:-16px;bottom:-22px;color:#8080ff}
.navbar{position:absolute;left:50%;bottom:12px;transform:translateX(-50%);display:flex;align-items:center;
        gap:14px;height:48px;padding:0 8px 0 7px;background:var(--bg)}
.navbar button{display:flex;align-items:center;gap:11px}
.navbar .plain{margin-right:8px}
.navbar .tight{gap:5px}
.navbar svg{width:30px;height:30px}

/* timeline */
footer{flex:none;height:100px;background:var(--bg)}
.rule{height:6px;background:var(--bar)}
.scroll{height:14px;padding-right:12px}
.thumb{width:840px;height:14px;margin-left:auto;background:var(--bar);border-radius:0 8px 8px 8px}
.timeline{display:flex;height:80px}
.playback{display:flex;align-items:center;gap:18px;padding-left:17px;width:274px}
.playback svg,#features svg{width:32px;height:32px}
.track{position:relative;padding:8px 10px 0}
#features{display:flex}
#features li::after{content:"";display:block;width:4px;height:8px;margin:0 auto;background:var(--bar)}
#features button{display:flex;align-items:center;justify-content:center;width:48px;height:48px;border-radius:4px}
#features .current{background:#e5e820}
.track::after{content:"";display:block;height:4px;margin:0 22px 0 -10px;
              background:linear-gradient(90deg,var(--bar) 6px,transparent 6px 10px,var(--bar) 10px 18px,transparent 18px 22px,var(--bar) 22px)}
.marker{position:absolute;right:0;top:4px;width:22px;height:64px}
.timeline .settings{margin-left:auto;padding-right:27px}
.timeline .settings svg{width:32px;height:32px}
```
